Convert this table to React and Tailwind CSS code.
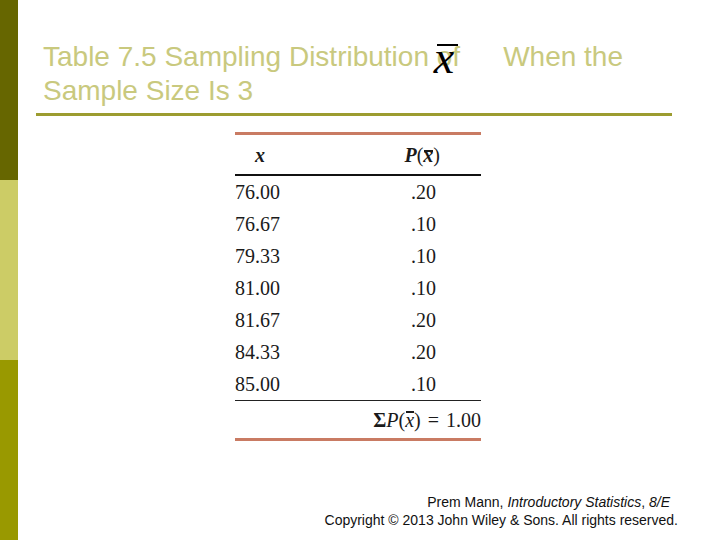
import React from 'react';

const rows = [
    ["76.00", ".20"],
    ["76.67", ".10"],
    ["79.33", ".10"],
    ["81.00", ".10"],
    ["81.67", ".20"],
    ["84.33", ".20"],
    ["85.00", ".10"],
];

const serif = { fontFamily: '"Liberation Serif", "Times New Roman", serif' };

// x with a bar over it
const XBar = ({ bold }) => (
    <span className={`relative italic ${bold ? "font-bold" : ""}`}>
        x
        <span className="absolute left-[1px] right-0 top-[0.33em] h-[1.5px] bg-[#1a1a1a]" />
    </span>
);

const App = () => {
    return (
        <div className="w-[720px] h-[540px] flex bg-white overflow-hidden" style={{ fontFamily: '"Liberation Sans", Arial, sans-serif' }}>
            <div className="w-[18px] flex flex-col shrink-0">
                <div className="h-[180px] bg-[#666600]" />
                <div className="h-[180px] bg-[#cccc66]" />
                <div className="h-[180px] bg-[#999900]" />
            </div>

            <div className="flex-1 flex flex-col pl-[18px] pr-[48px] pt-[40px]">
                <h1 className="pl-[7px] text-[28px] leading-[34px] text-[#c9c97e] font-normal whitespace-nowrap">
                    Table 7.5 Sampling Distribution{" "}
                    <span className="relative">
                        of
                        <span className="absolute left-[-3px] top-[-6px] text-[46px] leading-[46px] italic text-black" style={serif}>x</span>
                        <span className="absolute left-[0px] top-[3px] w-[21px] h-[2px] bg-black" />
                    </span>
                    <span className="ml-[43px]">When the</span>
                    <br />
                    Sample Size Is 3
                </h1>
                <div className="mt-[5px] h-[3px] bg-[#9c9c30]" />

                <div className="mt-[16px] ml-[199px] w-[246px] text-[20px] text-[#1a1a1a]" style={serif}>
                    <div className="h-[3px] bg-[#c97b63]" />
                    <div className="h-[39px] flex items-center justify-between">
                        <span className="pl-[20px] italic font-bold">x</span>
                        <span className="pr-[41px]">
                            <span className="italic font-bold">P</span>(<XBar bold />)
                        </span>
                    </div>
                    <div className="h-[2px] bg-[#111]" />
                    {rows.map(([x, p]) => (
                        <div key={x} className="h-[32px] flex items-center justify-between">
                            <span>{x}</span>
                            <span className="pr-[45px]">{p}</span>
                        </div>
                    ))}
                    <div className="h-[1px] bg-[#222]" />
                    <div className="h-[37px] flex items-center justify-end">
                        <span className="font-bold">Σ</span>
                        <span className="italic">P</span>(<XBar />)
                        <span className="mx-[7px]">=</span>
                        <span>1.00</span>
                    </div>
                    <div className="h-[3px] bg-[#c97b63]" />
                </div>

                <div className="mt-auto mb-[11px] mr-[-6px] self-end text-right text-[14px] leading-[18px] text-[#111]">
                    <div className="pr-[8px]">Prem Mann, <i>Introductory Statistics</i>, <i>8/E</i></div>
                    <div>Copyright © 2013 John Wiley &amp; Sons. All rights reserved.</div>
                </div>
            </div>
        </div>
    );
};

export default App;
